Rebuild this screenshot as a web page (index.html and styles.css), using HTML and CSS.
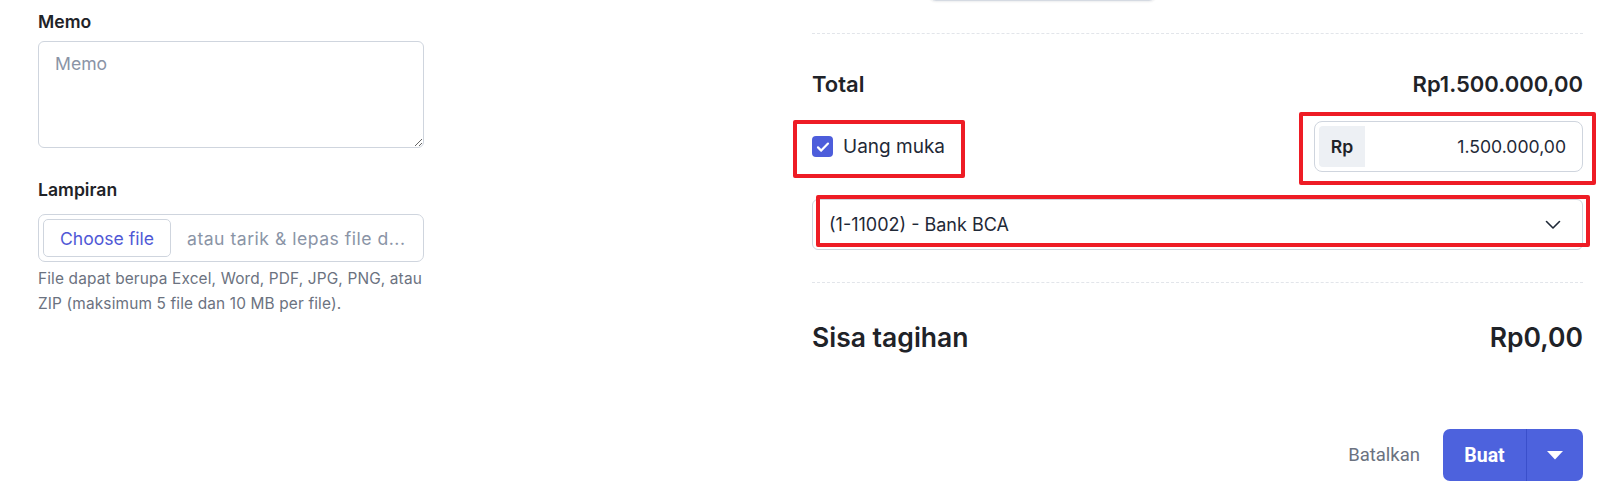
FILE: index.html
```html
<!DOCTYPE html>
<html lang="id">
<head>
<meta charset="utf-8">
<title>Form</title>
<link rel="stylesheet" href="styles.css">
</head>
<body>
<div class="page">
  <div class="left">
    <label class="label" for="memo">Memo</label>
    <textarea id="memo" class="memo" placeholder="Memo"></textarea>

    <div class="label label-gap">Lampiran</div>
    <div class="filebox">
      <span class="filebtn">Choose file</span>
      <span class="filehint">atau tarik &amp; lepas file d...</span>
    </div>
    <p class="help">File dapat berupa Excel, Word, PDF, JPG, PNG, atau ZIP (maksimum 5 file dan 10 MB per file).</p>
  </div>

  <div class="right">
    <div class="stub"></div>
    <div class="dash dash-1"></div>

    <div class="row total-row">
      <span>Total</span>
      <span>Rp1.500.000,00</span>
    </div>

    <div class="row pay-row">
      <div class="check-wrap">
        <span class="checkbox">
          <svg width="18" height="18" viewBox="0 0 18 18"><path d="M4 9.4l3.2 3.2L14 5.6" fill="none" stroke="#fff" stroke-width="2.2" stroke-linecap="round" stroke-linejoin="round"/></svg>
        </span>
        <span class="check-text">Uang muka</span>
        <span class="annot annot-check"></span>
      </div>
      <div class="amount-wrap">
        <div class="amount">
          <span class="addon">Rp</span>
          <span class="amount-val">1.500.000,00</span>
        </div>
        <span class="annot annot-amount"></span>
      </div>
    </div>

    <div class="select-wrap">
      <div class="select">
        <span>(1-11002) - Bank BCA</span>
        <svg class="chev" width="16" height="10" viewBox="0 0 16 10"><path d="M1.5 1.5L8 8l6.5-6.5" fill="none" stroke="#1f2937" stroke-width="1.6" stroke-linecap="round" stroke-linejoin="round"/></svg>
      </div>
      <span class="annot annot-select"></span>
    </div>

    <div class="dash dash-2"></div>

    <div class="row sisa-row">
      <span>Sisa tagihan</span>
      <span>Rp0,00</span>
    </div>

    <div class="actions">
      <span class="cancel">Batalkan</span>
      <div class="split">
        <span class="split-main">Buat</span>
        <span class="split-caret">
          <svg width="16" height="9" viewBox="0 0 16 9"><path d="M0 0h16L8 8.5z" fill="#fff"/></svg>
        </span>
      </div>
    </div>
  </div>
</div>
</body>
</html>
```

FILE: styles.css
```css
* { box-sizing: border-box; }
html, body { margin: 0; padding: 0; background: #fff; }
body {
  font-family: Inter, "Noto Sans", sans-serif;
  color: #1f2937;
  overflow: hidden;
  height: 493px;
}
.page {
  display: grid;
  grid-template-columns: minmax(0, 1fr) 771px;
  padding: 0 18px 0 38px;
}
.left {
  width: 386px;
  display: flex;
  flex-direction: column;
  padding-top: 10px;
}
.label {
  font-size: 17.6px;
  font-weight: 600;
  line-height: 24px;
  color: #1f2328;
}
.label-gap { margin-top: 30px; }
.memo {
  margin-top: 7px;
  width: 386px;
  height: 107px;
  border: 1px solid #cfd5de;
  border-radius: 6px;
  padding: 11px 16px;
  font-family: Inter, sans-serif;
  font-size: 17.6px;
  line-height: 22px;
  color: #1f2937;
  resize: vertical;
  outline: none;
  display: block;
}
.memo::placeholder { color: #8a94a6; }
.filebox {
  margin-top: 12px;
  height: 48px;
  border: 1px solid #cfd5de;
  border-radius: 7px;
  display: flex;
  align-items: center;
  padding: 0 4px;
  gap: 16px;
  overflow: hidden;
}
.filebtn {
  flex: none;
  height: 38px;
  width: 128px;
  border: 1px solid #cfd5de;
  border-radius: 5px;
  display: flex;
  align-items: center;
  justify-content: center;
  color: #4f58d6;
  font-family: Inter, sans-serif;
  font-size: 17.6px;
}
.filehint {
  color: #8a94a6;
  font-family: Inter, sans-serif;
  font-size: 17.6px;
  letter-spacing: 0.5px;
  white-space: nowrap;
}
.help {
  margin: 5px 0 0;
  font-family: Inter, sans-serif;
  font-size: 15.4px;
  letter-spacing: 0.15px;
  line-height: 24.5px;
  color: #6b7280;
}

.right {
  display: flex;
  flex-direction: column;
}
.stub {
  margin-top: -38px;
  margin-left: 116px;
  width: 229px;
  height: 39px;
  border: 1px solid #d5dae2;
  border-radius: 8px;
  box-shadow: 0 1px 2px rgba(16, 24, 40, 0.08);
}
.dash { border-top: 1px dashed #e2e5ea; height: 0; }
.dash-1 { margin-top: 32px; }
.row {
  display: flex;
  justify-content: space-between;
  align-items: center;
}
.total-row {
  margin-top: 36px;
  height: 28px;
  font-size: 22px;
  font-weight: 600;
  color: #1f2328;
}
.pay-row {
  margin-top: 23px;
  height: 51px;
}
.check-wrap {
  position: relative;
  display: flex;
  align-items: center;
  gap: 10px;
  height: 51px;
}
.checkbox {
  width: 21px;
  height: 21px;
  border-radius: 4px;
  background: #4d5ddb;
  display: flex;
  align-items: center;
  justify-content: center;
}
.check-text { font-size: 19px; color: #1f2937; }
.annot {
  position: absolute;
  border: 4px solid #ee1c25;
  border-radius: 2px;
  pointer-events: none;
}
.annot-check { left: -19px; right: -20px; top: -1px; bottom: -6px; }
.amount-wrap { position: relative; }
.amount {
  width: 269px;
  height: 51px;
  border: 1px solid #cfd5de;
  border-radius: 8px;
  display: flex;
  align-items: center;
  padding: 4px;
}
.addon {
  width: 46px;
  height: 41px;
  background: #edf0f4;
  border-radius: 4px 0 0 4px;
  display: flex;
  align-items: center;
  justify-content: center;
  font-size: 17.6px;
  font-weight: 600;
  color: #1f2328;
}
.amount-val {
  flex: 1;
  text-align: right;
  padding-right: 12px;
  font-size: 17.6px;
  color: #1f2937;
}
.annot-amount { left: -15px; right: -13px; top: -9px; bottom: -13px; }
.select-wrap {
  position: relative;
  margin-top: 27px;
}
.select {
  height: 51px;
  border: 1px solid #cfd5de;
  border-radius: 6px;
  display: flex;
  align-items: center;
  justify-content: space-between;
  padding: 0 21px 0 16px;
  font-size: 18px;
  color: #1f2937;
}
.annot-select { left: 4px; right: -7px; top: -4px; bottom: 3px; }
.dash-2 { margin-top: 32px; }
.sisa-row {
  margin-top: 35px;
  height: 38px;
  font-size: 26.5px;
  font-weight: 600;
  color: #1f2328;
}
.actions {
  margin-top: 73px;
  display: flex;
  justify-content: flex-end;
  align-items: center;
  gap: 23px;
}
.cancel {
  font-family: Roboto, sans-serif;
  font-size: 18.5px;
  color: #6b7280;
}
.split {
  display: flex;
  height: 52px;
  width: 140px;
  border-radius: 7px;
  background: #4d62dd;
  overflow: hidden;
}
.split-main {
  width: 84px;
  display: flex;
  align-items: center;
  justify-content: center;
  color: #fff;
  font-family: Roboto, sans-serif;
  font-weight: 700;
  font-size: 19.5px;
  border-right: 1px solid #3a4fcb;
}
.split-caret {
  flex: 1;
  display: flex;
  align-items: center;
  justify-content: center;
}
```
